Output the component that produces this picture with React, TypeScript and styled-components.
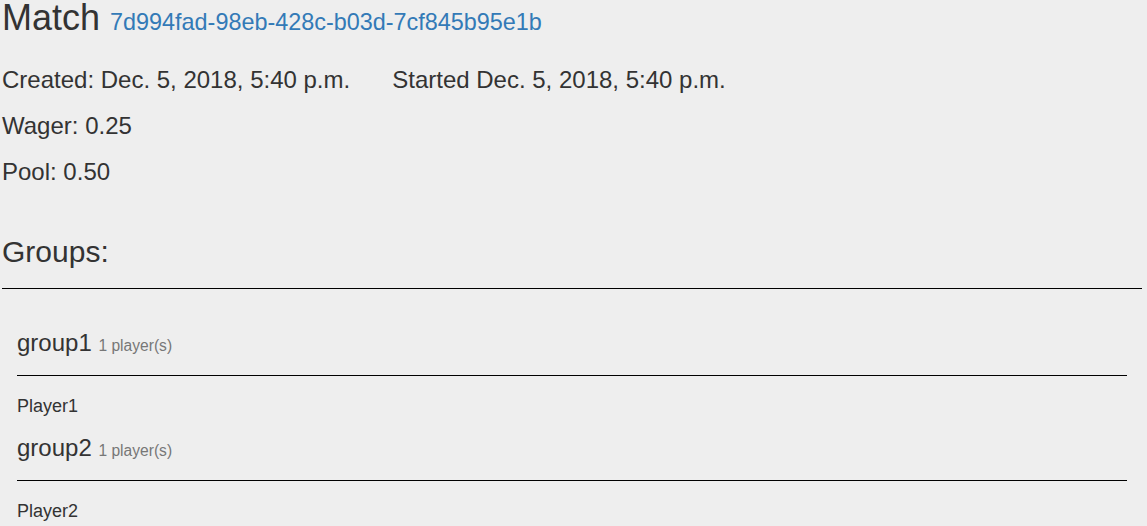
import React from "react";
import styled, { createGlobalStyle } from "styled-components";

const GlobalStyle = createGlobalStyle`
  html, body {
    margin: 0;
    padding: 0;
    background: #eeeeee;
  }
  body {
    font-family: "Liberation Sans", Arial, Helvetica, sans-serif;
    color: #333333;
  }
`;

const Page = styled.main`
  width: 1140px;
  margin-left: 2px;
  padding-bottom: 40px;
`;

const Title = styled.h1`
  margin: 0;
  font-size: 36px;
  line-height: 36px;
  font-weight: 400;
  color: #333333;
`;

const Uuid = styled.a`
  font-size: 65%;
  color: #337ab7;
  text-decoration: none;
`;

const InfoList = styled.section`
  display: flex;
  flex-direction: column;
  gap: 20px;
  margin-top: 27px;
`;

const InfoRow = styled.div`
  display: flex;
  font-size: 24px;
  line-height: 26px;
`;

const InfoItem = styled.span<{ $gap?: number }>`
  margin-left: ${(p) => p.$gap ?? 0}px;
`;

const SectionTitle = styled.h2`
  margin: 50px 0 0;
  font-size: 30px;
  line-height: 33px;
  font-weight: 400;
`;

const Rule = styled.hr<{ $top: number }>`
  margin: ${(p) => p.$top}px 0 0;
  border: 0;
  border-top: 1px solid #000000;
  height: 0;
`;

const GroupList = styled.div`
  padding: 0 15px;
`;

const Group = styled.section`
  margin-top: 19px;
  &:first-child {
    margin-top: 41px;
  }
`;

const GroupName = styled.h3`
  margin: 0;
  font-size: 24px;
  line-height: 26px;
  font-weight: 400;
`;

const Count = styled.small`
  font-size: 65%;
  color: #777777;
`;

const Player = styled.div`
  margin-top: 20px;
  font-size: 18px;
  line-height: 20px;
`;

const groups = [
  { name: "group1", players: ["Player1"] },
  { name: "group2", players: ["Player2"] },
];

export default function App() {
  return (
    <>
      <GlobalStyle />
      <Page>
        <Title>
          Match <Uuid href="#">7d994fad-98eb-428c-b03d-7cf845b95e1b</Uuid>
        </Title>
        <InfoList>
          <InfoRow>
            <InfoItem>Created: Dec. 5, 2018, 5:40 p.m.</InfoItem>
            <InfoItem $gap={42}>Started Dec. 5, 2018, 5:40 p.m.</InfoItem>
          </InfoRow>
          <InfoRow>Wager: 0.25</InfoRow>
          <InfoRow>Pool: 0.50</InfoRow>
        </InfoList>
        <SectionTitle>Groups:</SectionTitle>
        <Rule $top={20} />
        <GroupList>
          {groups.map((g) => (
            <Group key={g.name}>
              <GroupName>
                {g.name} <Count>{g.players.length} player(s)</Count>
              </GroupName>
              <Rule $top={16} />
              {g.players.map((p) => (
                <Player key={p}>{p}</Player>
              ))}
            </Group>
          ))}
        </GroupList>
      </Page>
    </>
  );
}
